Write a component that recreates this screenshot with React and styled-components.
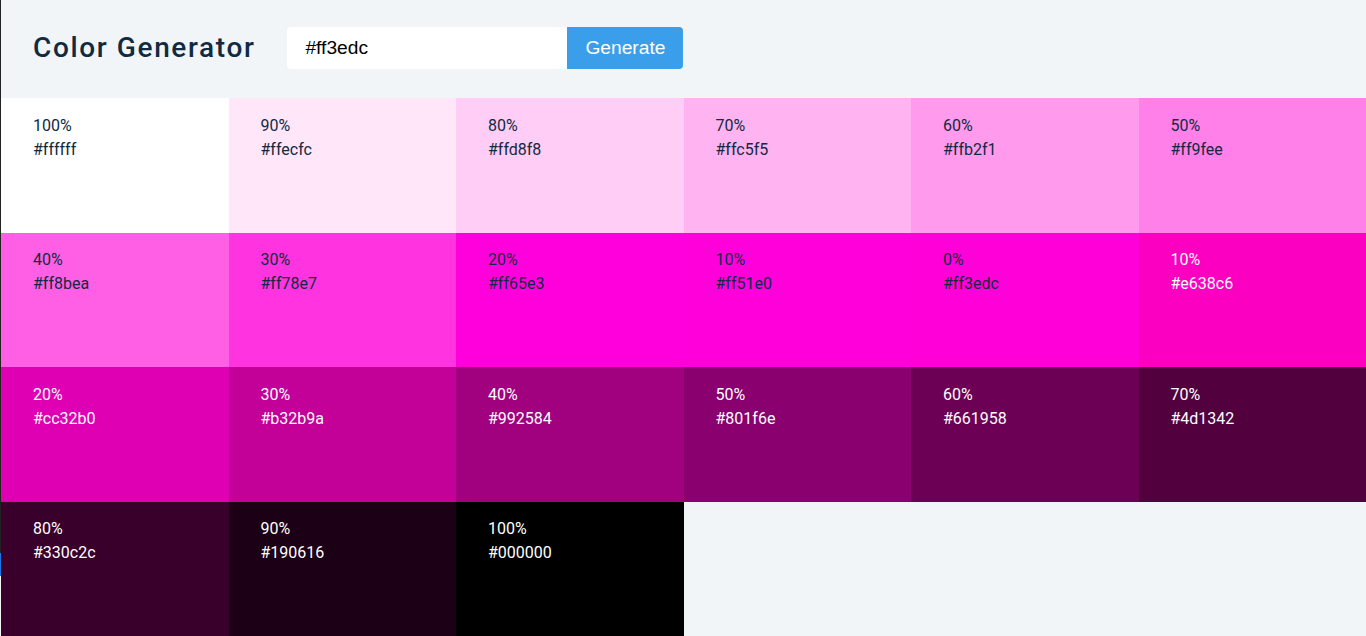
import React, { useState } from "react";
import styled, { createGlobalStyle } from "styled-components";

const GlobalStyle = createGlobalStyle`
  * { box-sizing: border-box; margin: 0; padding: 0; }
  html, body { height: 100%; }
  body {
    background: #f1f5f8;
    font-family: Roboto, "Liberation Sans", Arial, sans-serif;
    color: #102a42;
    padding-left: 1px;
  }
  #root { height: 100%; }
`;

const Page = styled.div`
  height: 100%;
  display: flex;
  flex-direction: column;
`;

const Header = styled.section`
  display: flex;
  align-items: center;
  gap: 32px;
  padding: 27px 32px 29px;
`;

const Title = styled.h3`
  font-family: Roboto, sans-serif;
  font-size: 28px;
  font-weight: 500;
  letter-spacing: 1.63px;
  line-height: 1.5;
  color: #102a42;
`;

const Form = styled.form`
  display: flex;
`;

const Input = styled.input`
  width: 280px;
  height: 42px;
  border: none;
  outline: none;
  background: #fff;
  border-radius: 4px 0 0 4px;
  padding: 0 18px;
  font-family: "Liberation Sans", Arial, sans-serif;
  font-size: 19.2px;
  color: #000;
`;

const Button = styled.button`
  height: 42px;
  width: 116px;
  border: none;
  background: #3b9eea;
  color: #fff;
  border-radius: 0 4px 4px 0;
  font-family: "Liberation Sans", Arial, sans-serif;
  font-size: 19.2px;
  cursor: pointer;
`;

const Grid = styled.section`
  flex: 1;
  display: grid;
  grid-template-columns: repeat(6, 1fr);
  grid-template-rows: repeat(4, 1fr);
`;

const Swatch = styled.article`
  background: ${(p) => p.$bg};
  color: ${(p) => (p.$light ? "#ffffff" : "#102a42")};
  padding: 15.5px 32px;
  font-family: Roboto, sans-serif;
  font-size: 16px;
  line-height: 24px;
`;

const Line = styled.p``;

const EdgeStrip = styled.div`
  position: fixed;
  left: 0;
  top: 0;
  width: 1px;
  height: 576px;
  background: linear-gradient(#222 0, #222 553px, #1677e6 553px, #1677e6 576px);
  pointer-events: none;
`;

const colors = [
  ["100%", "#ffffff", "#ffffff"],
  ["90%", "#ffecfc", "#ffe6f9"],
  ["80%", "#ffd8f8", "#ffcdf5"],
  ["70%", "#ffc5f5", "#ffb3f1"],
  ["60%", "#ffb2f1", "#ff9aec"],
  ["50%", "#ff9fee", "#ff80e8"],
  ["40%", "#ff8bea", "#ff5fe4"],
  ["30%", "#ff78e7", "#ff33df"],
  ["20%", "#ff65e3", "#ff00dd"],
  ["10%", "#ff51e0", "#ff00db"],
  ["0%", "#ff3edc", "#ff00d8"],
  ["10%", "#e638c6", "#fb00c0"],
  ["20%", "#cc32b0", "#de00b2"],
  ["30%", "#b32b9a", "#c30098"],
  ["40%", "#992584", "#a1007f"],
  ["50%", "#801f6e", "#8a006e"],
  ["60%", "#661958", "#6b0055"],
  ["70%", "#4d1342", "#52003e"],
  ["80%", "#330c2c", "#38002a"],
  ["90%", "#190616", "#1c0016"],
  ["100%", "#000000", "#000000"],
];

export default function App() {
  const [value, setValue] = useState("#ff3edc");
  return (
    <>
      <GlobalStyle />
      <Page>
        <Header>
          <Title>Color Generator</Title>
          <Form onSubmit={(e) => e.preventDefault()}>
            <Input value={value} onChange={(e) => setValue(e.target.value)} />
            <Button type="submit">Generate</Button>
          </Form>
        </Header>
        <Grid>
          {colors.map(([w, hex, bg], i) => (
            <Swatch key={i} $bg={bg} $light={i > 10}>
              <Line>{w}</Line>
              <Line>{hex}</Line>
            </Swatch>
          ))}
        </Grid>
      </Page>
      <EdgeStrip />
    </>
  );
}
